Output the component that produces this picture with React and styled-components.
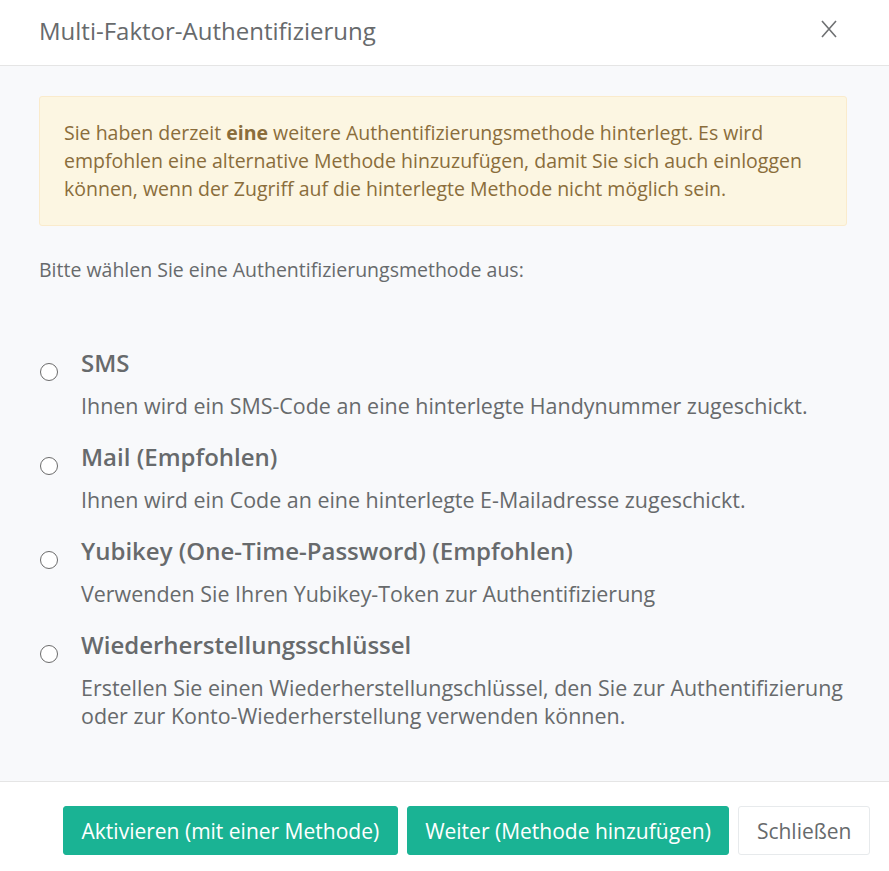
import React from "react";
import styled, { createGlobalStyle } from "styled-components";

const Global = createGlobalStyle`
  html, body { margin: 0; padding: 0; background: #ffffff; }
  body { font-family: "Open Sans", "Liberation Sans", sans-serif; color: #676a6c; }
  * { box-sizing: border-box; }
`;

const Modal = styled.div`
  width: 889px;
  min-height: 871px;
  display: flex;
  flex-direction: column;
  background: #fff;
`;

const Header = styled.div`
  height: 66px;
  display: flex;
  align-items: center;
  justify-content: space-between;
  padding: 0 52px 4px 39px;
  border-bottom: 1px solid #e5e5e5;
`;

const Title = styled.h4`
  margin: 0;
  font-family: "Open Sans", sans-serif;
  font-weight: 400;
  font-size: 24px;
  color: #676a6c;
`;

const Close = styled.button`
  border: 0;
  background: none;
  padding: 0;
  width: 16px;
  height: 18px;
  margin-top: -3px;
  display: flex;
  align-items: center;
  justify-content: center;
  cursor: pointer;
`;

const Body = styled.div`
  flex: 1;
  background: #f8f9fb;
  padding: 30px 42px 50px 39px;
  border-bottom: 1px solid #e5e5e5;
`;

const Alert = styled.div`
  background: #fcf6e2;
  border: 1px solid #faebcc;
  border-radius: 3px;
  padding: 22px 24px;
  color: #8a6d3b;
  font-size: 19.5px;
  line-height: 28px;
  b { font-weight: 700; }
`;

const Prompt = styled.p`
  margin: 30px 0 65px;
  font-size: 19.5px;
  line-height: 28px;
  color: #676a6c;
`;

const Options = styled.div`
  display: flex;
  flex-direction: column;
  gap: 23px;
`;

const Option = styled.label`
  display: grid;
  grid-template-columns: 42px 1fr;
  align-items: start;
  cursor: pointer;
`;

const Radio = styled.input.attrs({ type: "radio" })`
  appearance: none;
  width: 18px;
  height: 18px;
  margin: 14px 0 0 1px;
  border: 1px solid #6b6b6b;
  border-radius: 50%;
  background: #fff;
`;

const OptionTitle = styled.div`
  font-size: 24px;
  font-weight: 600;
  line-height: 28px;
  color: #676a6c;
  margin-bottom: 15px;
`;

const OptionDesc = styled.div`
  font-size: 21.45px;
  line-height: 28px;
  color: #676a6c;
`;

const Footer = styled.div`
  display: flex;
  justify-content: flex-end;
  gap: 9px;
  padding: 24px 19px 16px;
`;

const Button = styled.button`
  height: 49px;
  padding: 0 17.5px;
  border-radius: 3px;
  font-family: "Open Sans", sans-serif;
  font-size: 21px;
  cursor: pointer;
  border: 1px solid ${(p) => (p.$primary ? "#1ab394" : "#e7eaec")};
  background: ${(p) => (p.$primary ? "#1ab394" : "#ffffff")};
  color: ${(p) => (p.$primary ? "#ffffff" : "#676a6c")};
`;

const options = [
  { t: "SMS", d: "Ihnen wird ein SMS-Code an eine hinterlegte Handynummer zugeschickt." },
  { t: "Mail (Empfohlen)", d: "Ihnen wird ein Code an eine hinterlegte E-Mailadresse zugeschickt." },
  { t: "Yubikey (One-Time-Password) (Empfohlen)", d: "Verwenden Sie Ihren Yubikey-Token zur Authentifizierung" },
  {
    t: "Wiederherstellungsschlüssel",
    d: "Erstellen Sie einen Wiederherstellungschlüssel, den Sie zur Authentifizierung oder zur Konto-Wiederherstellung verwenden können.",
  },
];

export default function App() {
  return (
    <>
      <Global />
      <Modal>
        <Header>
          <Title>Multi-Faktor-Authentifizierung</Title>
          <Close aria-label="Schließen">
            <svg width="16" height="18" viewBox="0 0 16 18">
              <path d="M1 1 L15 17 M15 1 L1 17" stroke="#6f7173" strokeWidth="1.6" fill="none" />
            </svg>
          </Close>
        </Header>
        <Body>
          <Alert>
            Sie haben derzeit <b>eine</b> weitere Authentifizierungsmethode hinterlegt. Es wird
            empfohlen eine alternative Methode hinzuzufügen, damit Sie sich auch einloggen
            können, wenn der Zugriff auf die hinterlegte Methode nicht möglich sein.
          </Alert>
          <Prompt>Bitte wählen Sie eine Authentifizierungsmethode aus:</Prompt>
          <Options>
            {options.map((o) => (
              <Option key={o.t}>
                <Radio name="mfa" />
                <div>
                  <OptionTitle>{o.t}</OptionTitle>
                  <OptionDesc>{o.d}</OptionDesc>
                </div>
              </Option>
            ))}
          </Options>
        </Body>
        <Footer>
          <Button $primary>Aktivieren (mit einer Methode)</Button>
          <Button $primary>Weiter (Methode hinzufügen)</Button>
          <Button>Schließen</Button>
        </Footer>
      </Modal>
    </>
  );
}
